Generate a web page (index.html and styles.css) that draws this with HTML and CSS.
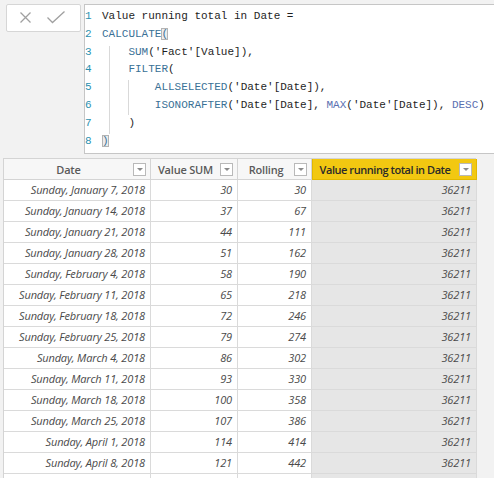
FILE: index.html
```html
<!DOCTYPE html>
<html>
<head>
<meta charset="utf-8">
<link rel="stylesheet" href="styles.css">
</head>
<body>
<div class="top">
  <div class="commit">
    <svg width="75" height="28" viewBox="0 0 75 28">
      <path d="M14.5 8.5 L24.5 18.5 M24.5 8.5 L14.5 18.5" stroke="#a0a0a0" stroke-width="1.3" fill="none"/>
      <path d="M41.5 13.5 L46.5 18.5 L58.5 7.5" stroke="#a0a0a0" stroke-width="1.3" fill="none"/>
    </svg>
  </div>
  <div class="editor">
    <div class="gutter">
      <div>1</div><div>2</div><div>3</div><div>4</div><div>5</div><div>6</div><div>7</div><div>8</div>
    </div>
    <div class="code">
      <span class="guide g1"></span>
      <span class="guide g2"></span>
      <div class="ln">Value running total in Date =</div>
      <div class="ln"><span class="kw">CALCULATE</span><span class="br">(</span></div>
      <div class="ln">    <span class="kw">SUM</span>('Fact'[Value]),</div>
      <div class="ln">    <span class="kw">FILTER</span>(</div>
      <div class="ln">        <span class="kw">ALLSELECTED</span>('Date'[Date]),</div>
      <div class="ln">        <span class="kw">ISONORAFTER</span>('Date'[Date], <span class="fn">MAX</span>('Date'[Date]), <span class="fn">DESC</span>)</div>
      <div class="ln">    )</div>
      <div class="ln"><span class="br">)</span></div>
    </div>
  </div>
</div>
<div class="grid-wrap">
  <div class="table">
    <div class="th"><span class="thl">Date</span><span class="fb"></span></div>
    <div class="th"><span class="thl">Value SUM</span><span class="fb"></span></div>
    <div class="th"><span class="thl">Rolling</span><span class="fb"></span></div>
    <div class="th sel"><span class="thl">Value running total in Date</span><span class="fb"></span></div>

    <div class="td">Sunday, January 7, 2018</div><div class="td">30</div><div class="td">30</div><div class="td s">36211</div>
    <div class="td">Sunday, January 14, 2018</div><div class="td">37</div><div class="td">67</div><div class="td s">36211</div>
    <div class="td">Sunday, January 21, 2018</div><div class="td">44</div><div class="td">111</div><div class="td s">36211</div>
    <div class="td">Sunday, January 28, 2018</div><div class="td">51</div><div class="td">162</div><div class="td s">36211</div>
    <div class="td">Sunday, February 4, 2018</div><div class="td">58</div><div class="td">190</div><div class="td s">36211</div>
    <div class="td">Sunday, February 11, 2018</div><div class="td">65</div><div class="td">218</div><div class="td s">36211</div>
    <div class="td">Sunday, February 18, 2018</div><div class="td">72</div><div class="td">246</div><div class="td s">36211</div>
    <div class="td">Sunday, February 25, 2018</div><div class="td">79</div><div class="td">274</div><div class="td s">36211</div>
    <div class="td">Sunday, March 4, 2018</div><div class="td">86</div><div class="td">302</div><div class="td s">36211</div>
    <div class="td">Sunday, March 11, 2018</div><div class="td">93</div><div class="td">330</div><div class="td s">36211</div>
    <div class="td">Sunday, March 18, 2018</div><div class="td">100</div><div class="td">358</div><div class="td s">36211</div>
    <div class="td">Sunday, March 25, 2018</div><div class="td">107</div><div class="td">386</div><div class="td s">36211</div>
    <div class="td">Sunday, April 1, 2018</div><div class="td">114</div><div class="td">414</div><div class="td s">36211</div>
    <div class="td">Sunday, April 8, 2018</div><div class="td">121</div><div class="td">442</div><div class="td s">36211</div>
    <div class="td e"></div><div class="td e"></div><div class="td e"></div><div class="td s e"></div>
  </div>
</div>
</body>
</html>
```
FILE: styles.css
```css
html, body {
  margin: 0;
  padding: 0;
  background: #f2f2f2;
  overflow: hidden;
  height: 478px;
}
.top {
  display: flex;
  align-items: flex-start;
  padding: 4px 0 0 6px;
  height: 150px;
}
.commit {
  width: 73px;
  height: 26px;
  border: 1px solid #d6d6d6;
  border-radius: 2px;
  background: #fff;
  flex: none;
  overflow: hidden;
}
.commit svg { display: block; margin: -1px; }
.editor {
  margin-left: 3px;
  flex: 1;
  height: 145px;
  background: #fff;
  border: 1px solid #c6c6c6;
  border-right: none;
  display: flex;
  font-family: "Liberation Mono", "DejaVu Sans Mono", monospace;
  font-size: 11px;
  line-height: 17.8px;
  padding-top: 3px;
}
.gutter {
  width: 17px;
  flex: none;
  color: #2b91af;
}
.code {
  position: relative;
  color: #1e1e1e;
}
.ln {
  height: 17.8px;
  white-space: pre;
}
.kw { color: #3a7196; }
.fn { color: #5a6fb0; }
.br {
  background: #ececec;
  outline: 1px solid #b4b4b4;
  outline-offset: -1px;
  color: #3a7196;
}
.guide {
  position: absolute;
  width: 1px;
  background: #d9d9d9;
}
.g1 { left: 7px; top: 38px; height: 88px; }
.g2 { left: 26px; top: 72px; height: 35px; }

.grid-wrap {
  padding: 4px 0 0 3px;
}
.table {
  display: grid;
  grid-template-columns: 147px 87px 74px 165px;
  grid-auto-rows: 21px;
  width: 473px;
  border-top: 1px solid #d4d4d4;
  border-left: 1px solid #d4d4d4;
  box-sizing: border-box;
}
.th {
  display: flex;
  align-items: center;
  background: #f7f7f7;
  border-right: 1px solid #d4d4d4;
  border-bottom: 1px solid #d4d4d4;
  padding: 0 4px 0 0;
  font-family: "Open Sans", "Noto Sans", sans-serif;
  font-weight: 600;
  font-size: 11px;
  color: #5a5a5a;
  box-sizing: border-box;
}
.thl {
  flex: 1;
  text-align: center;
  white-space: nowrap;
  letter-spacing: -0.2px;
}
.th.sel {
  background: #f2c811;
  color: #2a2a2a;
  border: 1px solid #e2b800;
  border-top: none;
}
.th.sel .thl {
  letter-spacing: -0.45px;
  padding-right: 2px;
}
.fb {
  width: 13px;
  height: 13px;
  border: 1px solid #b9b9b9;
  background: #fff;
  flex: none;
  position: relative;
  box-sizing: border-box;
}
.fb::after {
  content: "";
  position: absolute;
  left: 3px;
  top: 4px;
  border-left: 3px solid transparent;
  border-right: 3px solid transparent;
  border-top: 3px solid #8a8a8a;
}
.td {
  background: #fff;
  border-right: 1px solid #dadada;
  border-bottom: 1px solid #dadada;
  padding: 0 5px;
  text-align: right;
  font-family: "Open Sans", "Noto Sans", sans-serif;
  font-style: italic;
  font-size: 11px;
  line-height: 20px;
  color: #4a4a4a;
  white-space: nowrap;
  box-sizing: border-box;
  letter-spacing: -0.15px;
}
.td.s {
  background: #e6e6e6;
}
```
